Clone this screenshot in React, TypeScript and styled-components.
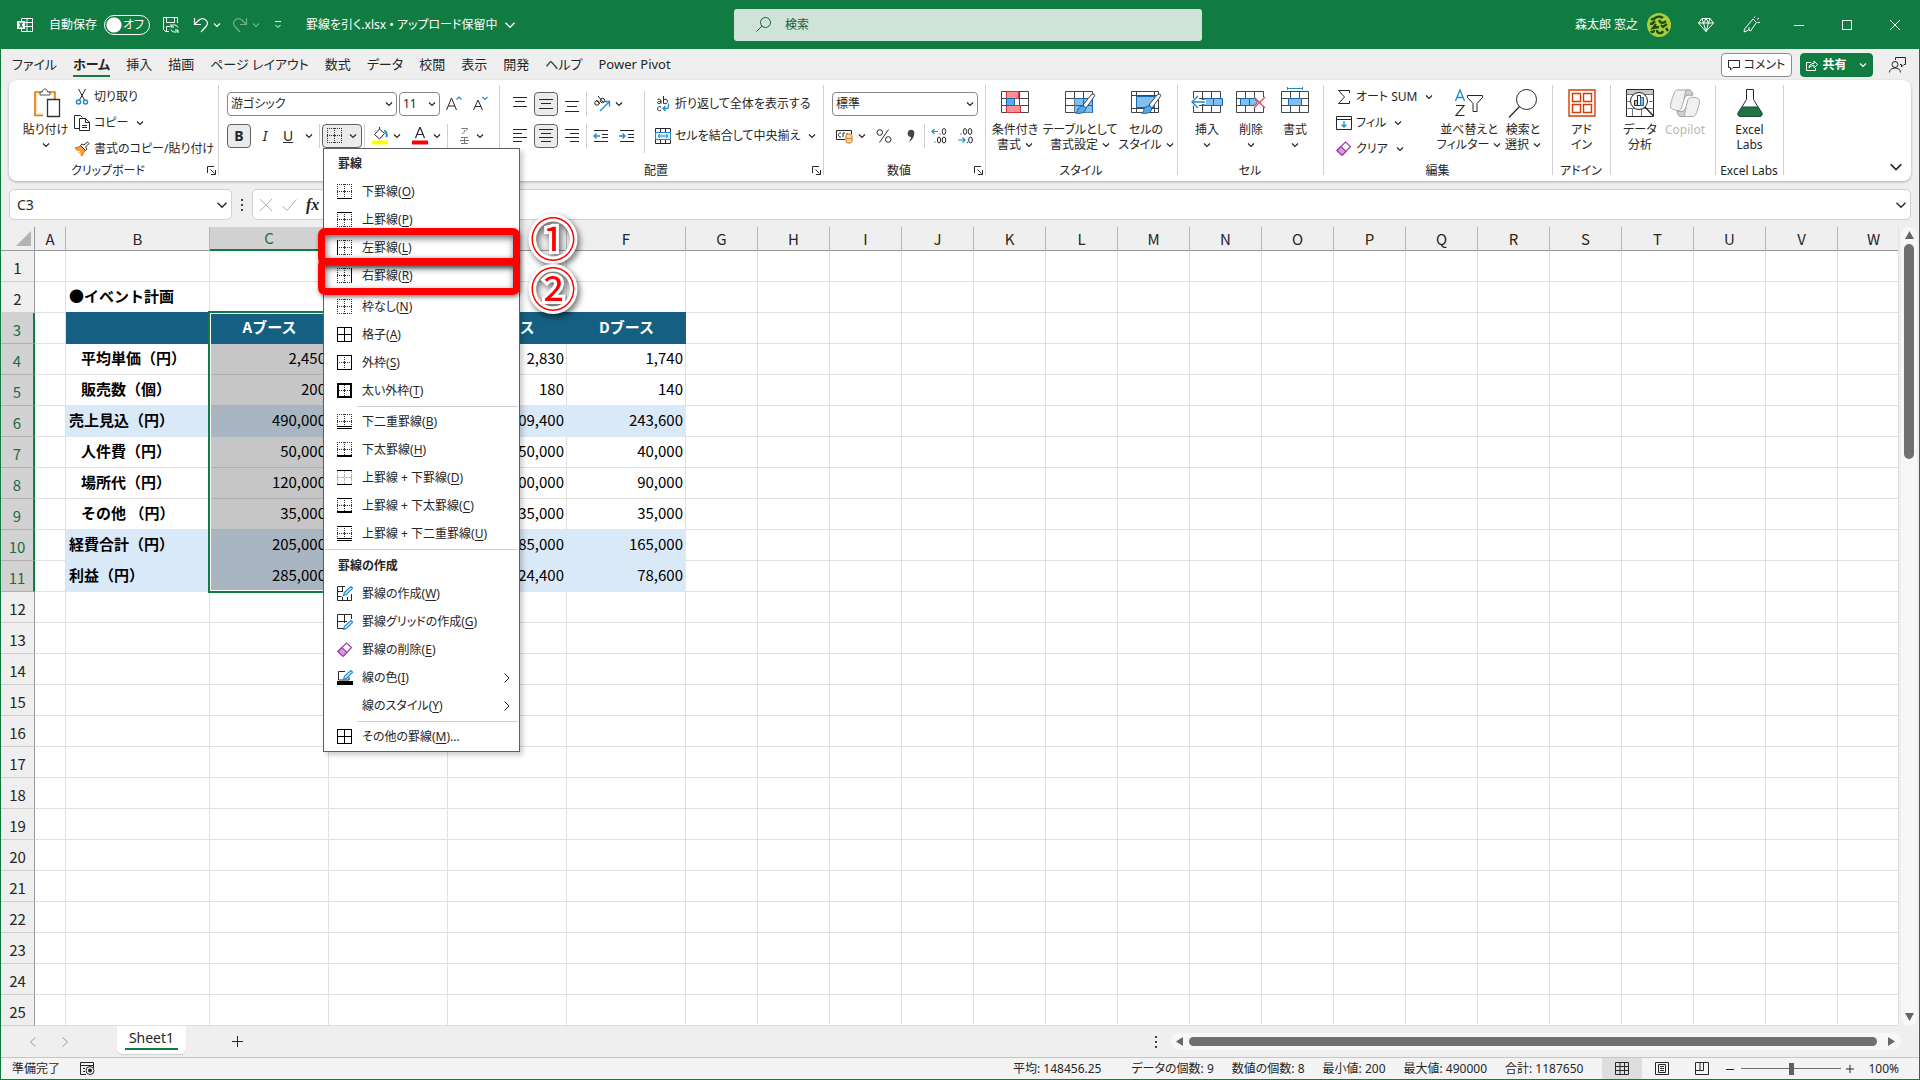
import React from "react";
import styled, { createGlobalStyle, css } from "styled-components";

const GREEN = "#107c41";
const INK = "#262626";
const BLUE = "#1e8bcd";
const UI = `"Noto Sans", "Noto Sans CJK JP", sans-serif`;
const SHEET = `"Noto Sans CJK JP", "Noto Sans", sans-serif`;

const Global = createGlobalStyle`
  *, *::after { box-sizing: border-box; }
  body { margin: 0; background: #efefef; overflow: hidden; }
  button, input, select { font: inherit; color: inherit; padding: 0; margin: 0; border: 0; background: none; border-radius: 0; font-feature-settings: inherit; }
  svg { display: block; flex: none; }
`;

const Window = styled.div`
  height: 100vh;
  display: flex;
  flex-direction: column;
  border: solid ${GREEN};
  border-width: 0 1px 1px;
  background: #efefef;
  color: ${INK};
  font: 12px/16px ${UI};
  font-feature-settings: "palt";
  white-space: nowrap;
`;

/* ---------- title bar ---------- */

const TitleBar = styled.header`
  height: 49px;
  flex: none;
  display: flex;
  align-items: center;
  padding-left: 16px;
  background: ${GREEN};
  color: #fff;
`;
const TitleLeft = styled.div`
  flex: 1;
  display: flex;
  align-items: center;
`;
const TitleRight = styled.div`
  flex: 1;
  display: flex;
  align-items: center;
  justify-content: flex-end;
`;
const AutoSave = styled.label`
  display: flex;
  align-items: center;
  gap: 7px;
  margin: 0 13px 0 16px;
`;
const Switch = styled.span`
  display: grid;
  align-items: center;
  > * { grid-area: 1 / 1; }
  > span { text-align: right; padding-right: 6px; }
  > input {
    appearance: none;
    width: 46px;
    height: 20px;
    border: 1px solid #fff;
    border-radius: 10px;
    background: radial-gradient(circle at 9px 9px, #fff 7px, transparent 8px);
  }
`;
const IconButton = styled.button<{ $w?: number; $faint?: boolean }>`
  width: ${(p) => p.$w ?? 16}px;
  height: 32px;
  display: flex;
  align-items: center;
  justify-content: center;
  opacity: ${(p) => (p.$faint ? 0.4 : 1)};
`;
const DocName = styled.button`
  display: flex;
  align-items: center;
  gap: 6px;
  margin-left: 20px;
`;
const Search = styled.label`
  width: min(468px, 30vw);
  height: 32px;
  display: flex;
  align-items: center;
  gap: 14px;
  padding-left: 22px;
  border-radius: 3px;
  background: #cfe3d8;
  color: #185c37;
  input { flex: 1; outline: 0; }
  input::placeholder { color: #185c37; opacity: 1; }
`;
const User = styled.button`
  display: flex;
  align-items: center;
  gap: 9px;
  margin-right: 14px;
`;

/* ---------- tab row ---------- */

const TabRow = styled.nav`
  height: 31px;
  flex: none;
  display: flex;
  align-items: center;
  gap: 16px;
  padding: 0 6px 0 11px;
  font-size: 13px;
`;
const Tab = styled.button<{ $active?: boolean }>`
  height: 24px;
  border-bottom: 2px solid transparent;
  ${(p) => p.$active && css`font-weight: 700; border-color: ${GREEN};`}
`;
const TabActions = styled.div`
  margin-left: auto;
  display: flex;
  align-items: center;
  gap: 8px;
  font-size: 12px;
`;
const PillButton = styled.button<{ $solid?: boolean }>`
  height: 24px;
  display: flex;
  align-items: center;
  justify-content: center;
  gap: 4px;
  width: ${(p) => (p.$solid ? 73 : 71)}px;
  border-radius: 4px;
  border: 1px solid ${(p) => (p.$solid ? GREEN : "#8a8a8a")};
  background: ${(p) => (p.$solid ? GREEN : "#fff")};
  color: ${(p) => (p.$solid ? "#fff" : INK)};
  font-weight: ${(p) => (p.$solid ? 700 : 400)};
`;

/* ---------- ribbon ---------- */

const Ribbon = styled.section`
  position: relative;
  z-index: 2;
  height: 101px;
  flex: none;
  display: flex;
  margin: 0 8px;
  border-radius: 8px;
  background: #fff;
  box-shadow: 0 1px 3px rgba(0, 0, 0, 0.28);
`;
const GroupBox = styled.div<{ $w: number }>`
  width: ${(p) => p.$w}px;
  display: flex;
  flex-direction: column;
  padding-bottom: 2px;
`;
const GroupBody = styled.div`
  flex: 1;
  display: flex;
`;
const GroupFoot = styled.div`
  height: 16px;
  display: flex;
  align-items: center;
  padding-right: 1px;
  > span { flex: 1; text-align: center; }
`;
const GroupRule = styled.div`
  width: 1px;
  margin: 5px 0 6px;
  background: #d0d0d0;
`;
const Rows = styled.div<{ $flush?: boolean }>`
  display: flex;
  flex-direction: column;
  gap: 8px;
  padding: 12px 0 0 ${(p) => (p.$flush ? 0 : 8)}px;
`;
const Row = styled.div`
  height: 24px;
  display: flex;
  align-items: center;
  gap: 2px;
`;
const Lines = styled.div<{ $w?: number }>`
  width: ${(p) => (p.$w ? `${p.$w}px` : "auto")};
  display: flex;
  flex-direction: column;
  padding-top: 4px;
`;
const LineButton = styled.button<{ $h?: number }>`
  height: ${(p) => p.$h ?? 26}px;
  display: flex;
  align-items: center;
  gap: 4px;
  > svg:nth-of-type(2) { margin-left: 4px; }
`;
const Tool = styled.button<{ $w?: number; $on?: boolean }>`
  width: ${(p) => p.$w ?? 24}px;
  height: 24px;
  display: flex;
  align-items: center;
  justify-content: ${(p) => (p.$w ? "space-between" : "center")};
  padding: 0 ${(p) => (p.$w ? 4 : 0)}px;
  border: ${(p) => (p.$on ? "1px solid #616161" : "0")};
  border-radius: 4px;
  background: ${(p) => (p.$on ? "#ebebeb" : "transparent")};
  font-size: 14px;
`;
const Rule = styled.div`
  width: 1px;
  height: 24px;
  background: #d0d0d0;
`;
const TallRule = styled.div`
  width: 1px;
  height: 62px;
  margin: 11px 10px 0 5px;
  background: #d0d0d0;
`;
const SelectBox = styled.span<{ $w: number }>`
  display: grid;
  align-items: center;
  width: ${(p) => p.$w}px;
  > * { grid-area: 1 / 1; }
  > svg { justify-self: end; margin-right: 4px; pointer-events: none; }
  > select {
    appearance: none;
    width: 100%;
    height: 24px;
    padding-left: 3px;
    border: 1px solid #8a8a8a;
    border-radius: 4px;
    background: #fff;
  }
`;
const BigButton = styled.button<{ $w: number; $dim?: boolean }>`
  width: ${(p) => p.$w}px;
  display: flex;
  flex-direction: column;
  align-items: center;
  padding-top: 7px;
  line-height: 15px;
  color: ${(p) => (p.$dim ? "#b8b8b8" : INK)};
  > svg { height: 32px; margin-bottom: 3px; }
  > span { display: flex; align-items: center; justify-content: center; gap: 4px; height: 15px; }
`;
const Indent = styled.div<{ $w: number }>`
  width: ${(p) => p.$w}px;
  flex: none;
`;
const Collapse = styled.button`
  margin: 0 8px 7px auto;
  align-self: flex-end;
`;

/* ---------- border menu ---------- */

const MenuAnchor = styled.div`
  position: relative;
  display: flex;
`;
const Menu = styled.div`
  position: absolute;
  z-index: 5;
  top: 24px;
  left: 1px;
  width: 197px;
  background: #fff;
  border: 1px solid #5f5f5f;
  box-shadow: 3px 3px 5px rgba(0, 0, 0, 0.2);
`;
const MenuHead = styled.div`
  height: 29px;
  padding-left: 14px;
  line-height: 29px;
  font-weight: 700;
`;
const MenuItem = styled.button`
  width: 100%;
  height: 28px;
  display: flex;
  align-items: center;
  gap: 9px;
  padding: 0 8px 0 13px;
  text-align: left;
  > span { flex: 1; }
  u { text-underline-offset: 2px; }
`;
const MenuRule = styled.div<{ $full?: boolean }>`
  height: 3px;
  padding: 1px 1px 1px ${(p) => (p.$full ? 1 : 33)}px;
  background: #cfcfcf content-box;
`;
const Marker = styled.div<{ $top: number }>`
  position: absolute;
  top: ${(p) => p.$top}px;
  left: -6px;
  right: -1px;
  height: 37px;
  border: 7px solid #f00;
  border-radius: 7px;
  box-shadow: 1px 2px 4px rgba(0, 0, 0, 0.5), inset 1px 3px 7px rgba(0, 0, 0, 0.6);
  pointer-events: none;
`;
const Badge = styled.div<{ $top: number }>`
  position: absolute;
  top: ${(p) => p.$top}px;
  left: 205px;
  width: 48px;
  text-align: center;
  font: 400 46px/48px "Noto Sans CJK JP", sans-serif;
  color: #f00;
  -webkit-text-stroke: 6px #fff;
  paint-order: stroke fill;
  filter: drop-shadow(2px 3px 3px rgba(0, 0, 0, 0.6));
`;

/* ---------- formula bar ---------- */

const FormulaRow = styled.div`
  height: 31px;
  flex: none;
  display: flex;
  align-items: center;
  margin: 8px 8px 7px;
`;
const Field = styled.div<{ $w?: number }>`
  ${(p) => (p.$w ? `width: ${p.$w}px;` : "flex: 1;")}
  height: 31px;
  display: flex;
  align-items: center;
  padding: 0 3px 0 7px;
  border: 1px solid #d0d0d0;
  border-radius: 5px;
  background: #fff;
  font-size: 14px;
  input { flex: 1; min-width: 0; outline: 0; }
`;
const Dots = styled.div`
  width: 20px;
  display: flex;
  justify-content: center;
`;
const Fx = styled.button`
  width: 16px;
  text-align: left;
  font: italic 700 16px/20px "Liberation Serif", serif;
`;

/* ---------- sheet ---------- */

const SheetArea = styled.main`
  flex: 1;
  min-height: 0;
  display: flex;
`;
const SheetClip = styled.div`
  flex: 1;
  min-width: 0;
  overflow: hidden;
  background: #fff;
  border-right: 1px solid #e0e0e0;
`;
const Table = styled.table`
  table-layout: fixed;
  width: 1909px;
  border-collapse: separate;
  border-spacing: 0;
  font: 15px/22px ${SHEET};
  font-feature-settings: normal;
  color: #000;
`;
const ColHead = styled.th<{ $on?: boolean }>`
  height: 24px;
  padding: 0;
  font-weight: 400;
  color: ${(p) => (p.$on ? "#1e6b41" : INK)};
  background: ${(p) => (p.$on ? "#d2d2d2" : "#efefef")};
  border-right: 1px solid #b4b4b4;
  border-bottom: ${(p) => (p.$on ? `2px solid ${GREEN}` : "1px solid #999")};
`;
const Corner = styled(ColHead)`
  border-right-color: #999;
  svg { margin-left: 14px; }
`;
const RowHead = styled.th<{ $on?: boolean }>`
  height: 31px;
  padding: 4px 0 0;
  font-weight: 400;
  color: ${(p) => (p.$on ? "#1e6b41" : INK)};
  background: ${(p) => (p.$on ? "#d2d2d2" : "#efefef")};
  border-right: ${(p) => (p.$on ? `2px solid ${GREEN}` : "1px solid #999")};
  border-bottom: 1px solid ${(p) => (p.$on ? "#b0b0b0" : "#cfcfcf")};
`;
const Cell = styled.td<{ $fill?: string; $line?: string; $kind?: string }>`
  height: 31px;
  padding: 0 2px 2px 3px;
  white-space: pre;
  border-right: 1px solid ${(p) => p.$line ?? p.$fill ?? "#e0e0e0"};
  border-bottom: 1px solid ${(p) => p.$line ?? p.$fill ?? "#e0e0e0"};
  ${(p) => p.$fill && `background: ${p.$fill};`}
  ${(p) => p.$fill && !p.$line && `box-shadow: 0 -1px 0 ${p.$fill};`}
  ${(p) => p.$kind === "num" && "text-align: right;"}
  ${(p) => p.$kind === "head" && "text-align: center; font-weight: 700; color: #fff;"}
  ${(p) => p.$kind === "label" && "font-weight: 700;"}
  ${(p) => p.$kind === "sub" && "font-weight: 700; padding-left: 15px;"}
`;
const ActiveCell = styled(Cell)`
  position: relative;
  &::after {
    content: "";
    position: absolute;
    top: -2px;
    left: -2px;
    right: -2px;
    height: 282px;
    border: 2px solid ${GREEN};
    box-shadow: inset 0 0 0 1px #fff;
  }
`;
const VScroll = styled.div`
  width: 16px;
  margin: 0 2px 0 2px;
  display: flex;
  flex-direction: column;
  align-items: center;
  padding: 4px 0;
  gap: 4px;
  border-radius: 8px;
  background: #f7f7f7;
`;
const VThumb = styled.div`
  width: 10px;
  height: 27.2%;
  border-radius: 5px;
  background: #707070;
`;
const Spacer = styled.div`
  flex: 1;
`;

/* ---------- sheet tabs and status ---------- */

const SheetTabs = styled.div`
  height: 32px;
  flex: none;
  display: flex;
  align-items: center;
  border-bottom: 1px solid #c6c6c6;
  padding-left: 16px;
`;
const SheetTab = styled.button`
  align-self: flex-start;
  height: 28px;
  width: 69px;
  margin: 0 3px 0 36px;
  padding-bottom: 2px;
  border-radius: 0 0 5px 5px;
  background: #fff;
  box-shadow: 0 1px 1px #cfcfcf;
  font-size: 14px;
  span { display: block; margin: 0 8px; border-bottom: 2px solid ${GREEN}; line-height: 20px; }
`;
const HScroll = styled.div`
  flex: 0 1 730px;
  height: 17px;
  margin: 0 18px 0 5px;
  padding: 0 5px;
  display: flex;
  align-items: center;
  gap: 4px;
  border-radius: 8px;
  background: #f7f7f7;
`;
const HThumb = styled.div`
  flex: 1;
  height: 9px;
  margin-right: 6px;
  border-radius: 5px;
  background: #707070;
`;
const Status = styled.footer`
  height: 21px;
  flex: none;
  display: flex;
  align-items: center;
  padding: 0 20px 0 11px;
  background: #f4f4f4;
`;
const Stats = styled.div`
  margin-left: auto;
  display: flex;
  gap: 18px;
  padding-right: 19px;
  > span:first-child { margin-right: 12px; }
`;
const ViewButton = styled.button<{ $on?: boolean }>`
  width: 40px;
  height: 21px;
  display: flex;
  align-items: center;
  justify-content: center;
  background: ${(p) => (p.$on ? "#dedede" : "transparent")};
`;
const Zoom = styled.input`
  appearance: none;
  width: 100px;
  height: 12px;
  margin: 0 3px;
  background: linear-gradient(#707070, #707070) center / 100% 1px no-repeat;
  &::-webkit-slider-thumb {
    appearance: none;
    width: 5px;
    height: 12px;
    background: #616161;
  }
`;

/* ---------- icons ---------- */

const Svg = ({ w = 16, h = w, children, c = INK, vb }: { w?: number; h?: number; c?: string; vb?: string; children: React.ReactNode }) => (
  <svg width={w} height={h} viewBox={vb ?? `0 0 ${w} ${h}`} fill="none" stroke={c} aria-hidden="true">
    {children}
  </svg>
);
const Chev = ({ c = INK, s = 8 }: { c?: string; s?: number }) => (
  <Svg w={s} vb="0 0 8 8" c={c}><path d="M1 2.5l3 3 3-3" strokeWidth={s > 8 ? 0.9 : 1.2} /></Svg>
);
const Launcher = () => (
  <Svg w={10}><path d="M.5 7V.5H7M3.5 3.5l4 4M8.5 4v4.5H4" /></Svg>
);

type Edge = 0 | 1 | 2 | 3;
const BorderIcon = ({ t = 0, b = 0, l = 0, r = 0, grid, faint, dbl }: { t?: Edge; b?: Edge; l?: Edge; r?: Edge; grid?: boolean; faint?: boolean; dbl?: boolean }) => {
  const dot = grid ? undefined : faint ? "3 1" : "1 1";
  const c = faint ? "#b5b5b5" : "#333";
  return (
    <Svg w={16} c={c}>
      <path d="M0 .5h15M0 14.5h15M.5 0v15M14.5 0v15M0 7.5h15M7.5 0v15" strokeDasharray={dot} stroke={grid ? "#000" : c} />
      {!grid && !faint && <path d="M6 7.5h3M7.5 6v3" />}
      {!!t && <path d={`M0 ${t / 2}h15`} strokeWidth={t} stroke="#000" />}
      {!!b && <path d={`M0 ${15 - b / 2}h15`} strokeWidth={b} stroke="#000" />}
      {!!l && <path d={`M${l / 2} 0v15`} strokeWidth={l} stroke="#000" />}
      {!!r && <path d={`M${15 - r / 2} 0v15`} strokeWidth={r} stroke="#000" />}
      {dbl && <><path d="M0 13.5h15" stroke="#fff" /><path d="M0 12.5h15M0 14.5h15" stroke="#000" /></>}
    </Svg>
  );
};
const Pencil = ({ x = 0, y = 0 }) => (
  <path transform={`translate(${x} ${y})`} d="M.5 9.5l1-3.2L7.8.6l1.8 1.7-6.2 6.2z" fill="#cfe6f7" stroke={BLUE} strokeWidth="1.2" />
);
const Eraser = () => (
  <Svg w={16} c="#9b3fa8">
    <path d="M1 9.5L9.500 1 14.500 5.500 6.500 14H5.500z" fill="#fff" strokeWidth="1.2" />
    <path d="M1 9.5L5 5.5l5 5L6.500 14H5.500z" fill="#d59ddc" strokeWidth="1.2" />
  </Svg>
);
const AlignIcon = ({ rows }: { rows: [number, number, number][] }) => (
  <Svg w={16}>{rows.map(([x, y, w]) => <path key={y} d={`M${x} ${y}.5h${w}`} />)}</Svg>
);
const IndentIcon = ({ out }: { out?: boolean }) => (
  <Svg w={16}>
    <path d="M1 2.5h14M9 6.5h6M9 9.5h6M1 13.5h14" />
    <path stroke={BLUE} strokeWidth="1.3" d={out ? "M7 8H1m2.5-2.5L1 8l2.5 2.5" : "M0 8h6M3.500 5.500L6 8l-2.500 2.500"} />
  </Svg>
);
const GridLines = ({ x = 1, y = 4 }) => (
  <path d={`M${x}.5 ${y}.5h27v21h-27zM${x} ${y + 7}.5h28M${x} ${y + 14}.5h28M${x + 9}.5 ${y}v22M${x + 18}.5 ${y}v22`} fill="#fff" stroke="#444" />
);
const Brush = () => (
  <g transform="translate(9 11)">
    <path d="M20 -4c2 0 2 1 1 3L13 10l-3-3L18 -3z" fill="#fff" stroke="#444" />
    <path d="M10 8c2 0 3.500 2 2.500 4-1.500 3-6 4-10 3 2-1 2-2 2.500-4 .5-2 3-3 5-3z" fill="#5ba8e5" stroke="#1467ae" />
  </g>
);

const Triangle = ({ d }: { d: string }) => <Svg w={9} c="none"><path d={d} fill="#666" /></Svg>;

/* ---------- ribbon pieces ---------- */

const Group = ({ w, label, launcher, children }: { w: number; label?: string; launcher?: boolean; children: React.ReactNode }) => (
  <>
    <GroupBox $w={w}>
      <GroupBody>{children}</GroupBody>
      <GroupFoot>
        <span>{label}</span>
        {launcher && <button aria-label="詳細"><Launcher /></button>}
      </GroupFoot>
    </GroupBox>
    <GroupRule />
  </>
);

const Big = ({ w, lines, drop, dim, children }: { w: number; lines: string[]; drop?: boolean; dim?: boolean; children: React.ReactNode }) => (
  <BigButton $w={w} $dim={dim}>
    {children}
    {lines.map((t, i) => (
      <span key={t}>{t}{drop && i === 1 && <Chev />}</span>
    ))}
    {drop && lines.length === 1 && <span><Chev /></span>}
  </BigButton>
);

const Item = ({ icon, text, k, tail, sub }: { icon?: React.ReactNode; text: string; k: string; tail?: string; sub?: boolean }) => (
  <MenuItem>
    {icon ?? <Indent $w={16} />}
    <span>{text}(<u>{k}</u>){tail}</span>
    {sub && <Svg w={8} h={12}><path d="M1.500 1.500L6 6l-4.500 4.500" /></Svg>}
  </MenuItem>
);

const BorderMenu = () => (
  <Menu>
    <MenuHead>罫線</MenuHead>
    <Item icon={<BorderIcon b={1} />} text="下罫線" k="O" />
    <Item icon={<BorderIcon t={1} />} text="上罫線" k="P" />
    <Item icon={<BorderIcon l={1} />} text="左罫線" k="L" />
    <Item icon={<BorderIcon r={1} />} text="右罫線" k="R" />
    <MenuRule />
    <Item icon={<BorderIcon />} text="枠なし" k="N" />
    <Item icon={<BorderIcon grid />} text="格子" k="A" />
    <Item icon={<BorderIcon t={1} b={1} l={1} r={1} />} text="外枠" k="S" />
    <Item icon={<BorderIcon t={2} b={2} l={2} r={2} />} text="太い外枠" k="T" />
    <MenuRule />
    <Item icon={<BorderIcon dbl />} text="下二重罫線" k="B" />
    <Item icon={<BorderIcon b={2} />} text="下太罫線" k="H" />
    <Item icon={<BorderIcon t={1} b={1} faint />} text="上罫線 + 下罫線" k="D" />
    <Item icon={<BorderIcon t={1} b={2} />} text="上罫線 + 下太罫線" k="C" />
    <Item icon={<BorderIcon t={1} dbl />} text="上罫線 + 下二重罫線" k="U" />
    <MenuRule $full />
    <MenuHead>罫線の作成</MenuHead>
    <Item icon={<Svg w={16}><path d="M8 .5H.5v14h14V8M.5 5.500H6M5.500 .5V5M.5 10.500h4M5.500 14v-3M10.500 14v-3" /><Pencil x={6} /></Svg>} text="罫線の作成" k="W" />
    <Item icon={<Svg w={16}><path d="M7 14.500H.5V.5h14V5M.5 7.500H10M7.500 .5V9" /><Pencil x={6} y={6} /></Svg>} text="罫線グリッドの作成" k="G" />
    <Item icon={<Eraser />} text="罫線の削除" k="E" />
    <Item icon={<Svg w={16}><path d="M8 1.500H1.500V10H12V7" /><Pencil x={6} /><path d="M0 13h16" strokeWidth="4" stroke="#000" /></Svg>} text="線の色" k="I" sub />
    <Item text="線のスタイル" k="Y" sub />
    <MenuRule />
    <Item icon={<BorderIcon grid />} text="その他の罫線" k="M" tail="..." />
    <Marker $top={79} />
    <Marker $top={109} />
    <Badge $top={63}>①</Badge>
    <Badge $top={113}>②</Badge>
  </Menu>
);

const Select = ({ w, value, label }: { w: number; value: string; label: string }) => (
  <SelectBox $w={w}>
    <select aria-label={label} defaultValue={value}><option>{value}</option></select>
    <Chev />
  </SelectBox>
);

const HomeRibbon = () => (
  <Ribbon>
    <Group w={209} label="クリップボード" launcher>
      <Indent $w={8} />
      <Big w={57} lines={["貼り付け"]} drop>
        <Svg w={30} h={32}>
          <path d="M12 28.500H4V5h20v8" stroke="#e07b00" strokeWidth="1.600" fill="#fbe7c0" />
          <path d="M6.500 7.500h15V26h-15z" fill="#fff" stroke="none" />
          <path d="M9 8V5h2.500c0-4 5-4 5 0H19v3z" fill="#fff" stroke="#555" />
          <path d="M16.500 12.500h12v17h-12z" fill="#fff" stroke="#333" strokeWidth="1.300" />
        </Svg>
      </Big>
      <Lines>
        <LineButton>
          <Svg w={16}><path d="M4.500 0l6 11M11.500 0l-6 11" /><circle cx="4.500" cy="13" r="2" stroke={BLUE} strokeWidth="1.500" /><circle cx="11.500" cy="13" r="2" stroke={BLUE} strokeWidth="1.500" /></Svg>
          切り取り
        </LineButton>
        <LineButton>
          <Svg w={16}><path d="M5 13.500H.5V.5h6l2 2M5.500 3.500h6l4 4v8h-10zM11.500 3.500v4h4M8 10.500h5M8 12.500h5" /></Svg>
          コピー<Chev />
        </LineButton>
        <LineButton>
          <Svg w={16}><path d="M1 7l6-2 4 4-3 6z" fill="#f6a13c" stroke="#d9730d" /><path d="M3 10l3 1M5 12l2 1" stroke="#fff" /><path d="M6.500 4.500l5 5 1.500-1.500L11.500 6l3.500-3.500L13.500 1 10 4 8 3z" fill="#fff" /></Svg>
          書式のコピー/貼り付け
        </LineButton>
      </Lines>
    </Group>
    <Group w={280}>
      <Rows>
        <Row>
          <Select w={170} value="游ゴシック" label="フォント" />
          <Select w={41} value="11" label="フォント サイズ" />
          <Tool aria-label="拡大"><Svg w={18}><path d="M1.500 15L6.500 3l5 12M3 11h7" /><path d="M11.500 4.500L14 2l2.500 2.500" stroke={BLUE} strokeWidth="1.200" /></Svg></Tool>
          <Tool aria-label="縮小"><Svg w={18}><path d="M2.500 15L7 5l4.500 10M4 11.500h6" /><path d="M11.500 2L14 4.500 16.500 2" stroke={BLUE} strokeWidth="1.200" /></Svg></Tool>
        </Row>
        <Row>
          <Tool $on><b>B</b></Tool>
          <Tool><i>I</i></Tool>
          <Tool $w={38}><u>U</u><Chev /></Tool>
          <Rule />
          <MenuAnchor>
            <Tool $w={40} $on aria-label="罫線"><BorderIcon /><Chev /></Tool>
            <BorderMenu />
          </MenuAnchor>
          <Rule />
          <Tool $w={38} aria-label="塗りつぶし"><Svg w={18}><path d="M3.500 7.500L8.500 2l5 4.500L8.500 12zM8.500 2V0" fill="#fff" /><path d="M13 4c2.500 0 3 3 2.500 6" stroke={BLUE} strokeWidth="2" /><path d="M1 15.500h16" stroke="#ff0" strokeWidth="4" /></Svg><Chev /></Tool>
          <Tool $w={38} aria-label="文字色"><Svg w={18}><path d="M4.500 11L9 0l4.500 11M6 7.500h6" strokeWidth="1.200" /><path d="M1 15.500h16" stroke="#f00" strokeWidth="4" /></Svg><Chev /></Tool>
          <Rule />
          <Tool $w={38} aria-label="ふりがな"><Svg w={18} c="#777"><path d="M7.500 1.500h6c0 1.500-1 2-2 2.500M10.500 3c0 2-1 3.500-2.500 4M7 10.500h7M6 13.500h9M7 16.500h7M10.500 10v7" /></Svg><Chev /></Tool>
        </Row>
      </Rows>
    </Group>
    <Group w={323} label="配置" launcher>
      <Rows>
        <Row>
          <Tool aria-label="上揃え"><AlignIcon rows={[[1, 1, 14], [3, 5, 10], [1, 10, 14]]} /></Tool>
          <Tool $on aria-label="上下中央"><AlignIcon rows={[[1, 3, 14], [3, 7, 10], [1, 12, 14]]} /></Tool>
          <Tool aria-label="下揃え"><AlignIcon rows={[[1, 5, 14], [3, 10, 10], [1, 15, 14]]} /></Tool>
          <Rule />
          <Tool $w={38} aria-label="方向"><Svg w={18}><path d="M7 16l9-9M11.500 6.500H16.500v5" stroke={BLUE} strokeWidth="1.300" /><circle cx="4" cy="8" r="2.200" /><path d="M3 5l4 4" /><circle cx="9.500" cy="5.500" r="2.200" /><path d="M5 1l5 6" /></Svg><Chev /></Tool>
        </Row>
        <Row>
          <Tool aria-label="左揃え"><AlignIcon rows={[[1, 1, 14], [1, 5, 9], [1, 9, 14], [1, 13, 9]]} /></Tool>
          <Tool $on aria-label="中央揃え"><AlignIcon rows={[[1, 1, 14], [3, 5, 10], [1, 9, 14], [3, 13, 10]]} /></Tool>
          <Tool aria-label="右揃え"><AlignIcon rows={[[1, 1, 14], [6, 5, 9], [1, 9, 14], [6, 13, 9]]} /></Tool>
          <Rule />
          <Tool aria-label="インデント減"><IndentIcon out /></Tool>
          <Tool aria-label="インデント増"><IndentIcon /></Tool>
        </Row>
      </Rows>
      <TallRule />
      <Rows $flush>
        <LineButton $h={24}>
          <Svg w={16}><path d="M2.500 3.500c2-1 3.500 0 3.500 1.500v2.500M6 5.500c-2 0-3.500 0-3.500 1.200S5 8 6 6.500M8.500 0v7.500c2 .8 4-.3 4-2.200s-2-2.800-4-1.500M6 11c-2-1-3.500 0-3.500 1.700S4 15 6 14.500" /><path d="M13.500 7.500v3c0 1-1 2-2 2H8.500M10.500 10l-2.500 2.500L10.500 15" stroke={BLUE} strokeWidth="1.300" /></Svg>
          折り返して全体を表示する
        </LineButton>
        <LineButton $h={24}>
          <Svg w={16}><path d="M.5.5h15v15H.5zM5.500.5V4M10.500.5V4M5.500 12v3.500M10.500 12v3.500" /><path d="M.5 4.500h15v7H.5z" fill="#e3f1fb" stroke={BLUE} /><path d="M3 8h10M5 6L3 8l2 2M11 6l2 2-2 2" stroke={BLUE} /></Svg>
          セルを結合して中央揃え<Chev />
        </LineButton>
      </Rows>
    </Group>
    <Group w={161} label="数値" launcher>
      <Rows>
        <Row><Select w={146} value="標準" label="表示形式" /></Row>
        <Row>
          <Tool $w={38} aria-label="通貨"><Svg w={18}><path d="M9 12.500H.5v-9h15V7M5 6c-2-.500-2.500 1-2.500 2s.5 2.500 2.500 2M7 10V6l2 0M11 9V6" /><path d="M10 8.500c0-2 6-2 6 0v6c0 2-6 2-6 0z" fill="#fbd9ae" stroke="#d9730d" /><path d="M10 11c1 1 5 1 6 0" stroke="#d9730d" /></Svg><Chev /></Tool>
          <Tool aria-label="パーセント"><Svg w={16}><circle cx="3.800" cy="4.500" r="2.800" /><circle cx="12.200" cy="11.500" r="2.800" /><path d="M12.500 1.500l-9 13" /></Svg></Tool>
          <Tool aria-label="桁区切り"><Svg w={16}><path d="M8 2c5-1 5 4 3.500 7-1 2-2.500 4-5 5 1.500-2 2.500-3 2.500-5C5 9 4.500 3 8 2z" fill="#444" stroke="none" /></Svg></Tool>
          <Rule />
          <Tool aria-label="小数点以下の桁数を増やす"><Svg w={18}><path d="M8 4.500H2M4.500 2L2 4.500 4.500 7" stroke={BLUE} strokeWidth="1.200" /><path d="M10 6.500v1M5 14.500v1" /><ellipse cx="14" cy="4.500" rx="1.800" ry="3" /><ellipse cx="9" cy="13" rx="1.600" ry="3" /><ellipse cx="14" cy="13" rx="1.800" ry="3" /></Svg></Tool>
          <Tool aria-label="小数点以下の桁数を減らす"><Svg w={18}><path d="M2 13h7M6.500 10.500L9 13l-2.500 2.500" stroke={BLUE} strokeWidth="1.200" /><path d="M5 6.500v1M11.500 15v1" /><ellipse cx="9" cy="4.500" rx="1.600" ry="3" /><ellipse cx="14" cy="4.500" rx="1.800" ry="3" /><ellipse cx="14.500" cy="13" rx="1.800" ry="3" /></Svg></Tool>
        </Row>
      </Rows>
    </Group>
    <Group w={191} label="スタイル">
      <Indent $w={2} />
      <Big w={54} lines={["条件付き", "書式"]} drop>
        <Svg w={30} h={32}><GridLines /><path d="M6.500 4.500h12v7h-12zM6.500 18.500h14v7h-14z" fill="#ff8f94" stroke="#d13438" /><path d="M6.500 11.500h8v7h-8z" fill="#5ba8e5" stroke="#1467ae" /></Svg>
      </Big>
      <Big w={76} lines={["テーブルとして", "書式設定"]} drop>
        <Svg w={32} h={32}><GridLines /><path d="M10.500 11.500h18v14h-18z" fill="#83beec" stroke="none" /><path d="M10.500 11.500h18v14M19.500 12v14M10 18.500h18" stroke="#1467ae" /><Brush /></Svg>
      </Big>
      <Big w={56} lines={["セルの", "スタイル"]} drop>
        <Svg w={32} h={32}><path d="M1.500 4.500h27v21h-27zM6.500 4v22M24.500 4v22M1 8.500h28M1 21.500h28" stroke="#444" /><path d="M6.500 9.500h18v11h-18z" fill="#83beec" stroke="#1467ae" /><Brush /></Svg>
      </Big>
    </Group>
    <Group w={145} label="セル">
      <Indent $w={7} />
      <Big w={44} lines={["挿入"]} drop>
        <Svg w={32} h={32}><GridLines x={2} /><path d="M12.500 11.500h19v7h-19zM22.500 12v7" fill="#83beec" stroke="#1467ae" /><path d="M2 15h13M7 9.500L1.500 15 7 20.500" stroke="#fff" strokeWidth="4" /><path d="M1 15h13M7 9L1 15l6 6" stroke={BLUE} strokeWidth="1.400" /></Svg>
      </Big>
      <Big w={44} lines={["削除"]} drop>
        <Svg w={32} h={32}><GridLines /><path d="M16 10h16v10H16z" fill="#fff" stroke="none" /><path d="M5.500 11.500h14l3 3.500-3 3.500h-14zM14.500 12v7" fill="#83beec" stroke="#1467ae" /><path d="M19 10l11 11M30 10L19 21" stroke="#e8484d" strokeWidth="1.300" /></Svg>
      </Big>
      <Big w={44} lines={["書式"]} drop>
        <Svg w={32} h={32}><GridLines x={2} /><path d="M9.500 11.500h13v7h-13z" fill="#83beec" stroke="#1467ae" /><path d="M8.500 0v3M23.500 0v3M8 1.500h16" stroke={BLUE} /></Svg>
      </Big>
    </Group>
    <Group w={228} label="編集">
      <Indent $w={12} />
      <Lines $w={105}>
        <LineButton><Svg w={16}><path d="M13.500 4V1.500h-11L8.500 8l-6 6.500h11V12" /></Svg>オート SUM<Chev /></LineButton>
        <LineButton><Svg w={16}><path d="M.5 1.500h15v13H.5zM.5 4.500h15" /><path d="M8 6v6M5.500 9.500L8 12l2.500-2.500" stroke={BLUE} strokeWidth="1.300" /></Svg>フィル<Chev /></LineButton>
        <LineButton><Eraser />クリア<Chev /></LineButton>
      </Lines>
      <Big w={56} lines={["並べ替えと", "フィルター"]} drop>
        <Svg w={30} h={32}><path d="M1.500 14L6 3l4.500 11M3 10.500h6" stroke={BLUE} strokeWidth="1.300" /><path d="M2 18.500h8L2 28.500h8.500" strokeWidth="1.200" /><path d="M13.500 8.500h15v2l-5.500 6v8h-4v-8l-5.500-6z" /></Svg>
      </Big>
      <Big w={52} lines={["検索と", "選択"]} drop>
        <Svg w={32} h={32}><circle cx="19.500" cy="12.500" r="10" fill="#fbfbfb" /><path d="M12.500 19.500L2 30.500" strokeWidth="1.200" /></Svg>
      </Big>
    </Group>
    <Group w={57} label="アドイン">
      <Big w={57} lines={["アド", "イン"]}>
        <Svg w={28} h={32} c="#d83b01"><path d="M1 3h26v26H1zM4.500 6.500h8v8h-8zM15.500 6.500h8v8h-8zM4.500 17.500h8v8h-8zM15.500 17.500h8v8h-8z" strokeWidth="1.400" /></Svg>
      </Big>
    </Group>
    <Group w={104}>
      <Indent $w={6} />
      <Big w={46} lines={["データ", "分析"]}>
        <Svg w={28} h={32}><path d="M.5 2.500h27v27H.5z" fill="#fff" /><path d="M1 3h26v4H1z" fill="#c8c8c8" stroke="none" /><path d="M.5 7.500h27M.5 14.500h5M.5 21.500h27M6.500 21v8M15.500 22v7M23 14.500h4.500" stroke="#777" /><circle cx="13" cy="14" r="8.500" fill="#fff" /><path d="M19 20l8.500 9" strokeWidth="1.400" /><path d="M8.500 13.500h3v5h-3z" fill="#bbb" /><path d="M11.500 8.500h3v10h-3z" fill="#fff" /><path d="M14.500 10.500h3v8h-3z" fill="#83beec" stroke="#1467ae" /></Svg>
      </Big>
      <Big w={44} lines={["Copilot"]} dim>
        <Svg w={32} h={32} c="#a8a8a8">
          <path d="M9 3h11c2.500 0 3 2 4 5h-4c-3 0-4 1-5 5l-3 9c-1 3-8 1-10-1-1.500-2 1-9 2.500-13C5.500 5 6.500 3 9 3z" fill="#f1f1f1" />
          <path d="M17 3h3c2.500 0 3 2 4 5h-4c-3 0-4 1-5 4z" fill="#cfcfcf" />
          <path d="M23 29.500H12c-2.500 0-3-2-4-5h4c3 0 4-1 5-5l2-7c1-3 9-3 11 0 1.500 2-1 9-2.500 13-1 3-2 4-4.500 4z" fill="#f1f1f1" />
          <path d="M15 29.500h-3c-2.500 0-3-2-4-5h4c3 0 4-1 5-4z" fill="#cfcfcf" />
        </Svg>
      </Big>
    </Group>
    <Group w={67} label="Excel Labs">
      <Big w={67} lines={["Excel", "Labs"]}>
        <Svg w={26} h={32}><path d="M9.500 2.500h7v10l8 13c1 2 0 4-2 4h-19c-2 0-3-2-2-4l8-13z" fill="#fff" /><path d="M5 20h16l4 6c.5 2-.5 3.500-2.500 3.500h-19C1.500 29.500.5 28 1 26z" fill="#217346" stroke="#184f33" /></Svg>
      </Big>
    </Group>
    <Collapse aria-label="リボンを折りたたむ"><Chev s={14} /></Collapse>
  </Ribbon>
);

/* ---------- sheet data ---------- */

const COLS = "ABCDEFGHIJKLMNOPQRSTUVW".split("");
const WIDTHS: Record<string, number> = { A: 31, B: 144, C: 119, D: 119, E: 119, F: 119 };
const TEAL = "#156082";
const PALE = "#dae9f8";

type Line = { label: string; kind: string; c?: string; e?: string; f?: string; fill?: string };
const DATA: Record<number, Line> = {
  2: { label: "●イベント計画", kind: "label" },
  3: { label: "", kind: "label", c: "Aブース", e: "Cブース", f: "Dブース", fill: TEAL },
  4: { label: "平均単価（円）", kind: "sub", c: "2,450", e: "2,830", f: "1,740" },
  5: { label: "販売数（個）", kind: "sub", c: "200", e: "180", f: "140" },
  6: { label: "売上見込（円）", kind: "label", c: "490,000", e: "509,400", f: "243,600", fill: PALE },
  7: { label: "人件費（円）", kind: "sub", c: "50,000", e: "50,000", f: "40,000" },
  8: { label: "場所代（円）", kind: "sub", c: "120,000", e: "100,000", f: "90,000" },
  9: { label: "その他 （円）", kind: "sub", c: "35,000", e: "35,000", f: "35,000" },
  10: { label: "経費合計（円）", kind: "label", c: "205,000", e: "185,000", f: "165,000", fill: PALE },
  11: { label: "利益（円）", kind: "label", c: "285,000", e: "324,400", f: "78,600", fill: PALE },
};

const renderCell = (col: string, row: number) => {
  const d = DATA[row];
  if (!d || !"BCDEF".includes(col)) return <Cell key={col} />;
  if (col === "B") return <Cell key={col} $kind={d.kind} $fill={d.fill}>{d.label}</Cell>;
  const text = col === "C" ? d.c : col === "E" ? d.e : col === "F" ? d.f : "";
  if (row === 3) {
    const C = col === "C" ? ActiveCell : Cell;
    return <C key={col} $kind="head" $fill={TEAL}>{text}</C>;
  }
  if (col === "C" && row > 3) {
    return <Cell key={col} $kind="num" $fill={d.fill ? "#a9b5c1" : "#c6c6c6"} $line={d.fill ? "#a9b5c1" : "#b0b0b0"}>{text}</Cell>;
  }
  return <Cell key={col} $kind="num" $fill={d.fill}>{text}</Cell>;
};

const Grid = () => (
  <SheetArea>
    <SheetClip>
      <Table>
        <colgroup>
          <col width={34} />
          {COLS.map((c) => <col key={c} width={WIDTHS[c] ?? 72} />)}
        </colgroup>
        <thead>
          <tr>
            <Corner><Svg w={17} h={17} c="none"><path d="M16 1v15H1z" fill="#b3b3b3" /></Svg></Corner>
            {COLS.map((c) => <ColHead key={c} scope="col" $on={c === "C"}>{c}</ColHead>)}
          </tr>
        </thead>
        <tbody>
          {Array.from({ length: 25 }, (_, i) => i + 1).map((r) => (
            <tr key={r}>
              <RowHead scope="row" $on={r >= 3 && r <= 11}>{r}</RowHead>
              {COLS.map((c) => renderCell(c, r))}
            </tr>
          ))}
        </tbody>
      </Table>
    </SheetClip>
    <VScroll>
      <Triangle d="M4.500 0L9 8H0z" />
      <VThumb />
      <Spacer />
      <Triangle d="M4.500 8L9 0H0z" />
    </VScroll>
  </SheetArea>
);

const TABS = ["ファイル", "ホーム", "挿入", "描画", "ページ レイアウト", "数式", "データ", "校閲", "表示", "開発", "ヘルプ", "Power Pivot"];
const STATS = ["平均: 148456.25", "データの個数: 9", "数値の個数: 8", "最小値: 200", "最大値: 490000", "合計: 1187650"];

export default function App() {
  return (
    <Window lang="ja">
      <Global />
      <TitleBar>
        <TitleLeft>
          <Svg w={16} c="#fff"><path d="M4.500 4V1.500h11v13h-11V12M10 1.500v13M4.500 5.500h11M8 9.500h7.500" /><path d="M0 4h8v8H0z" fill="#fff" stroke="none" /><path d="M2.500 5.500l3 5M5.500 5.500l-3 5" stroke={GREEN} strokeWidth="1.400" /></Svg>
          <AutoSave>
            自動保存
            <Switch><input type="checkbox" /><span>オフ</span></Switch>
          </AutoSave>
          <IconButton aria-label="保存"><Svg w={16} c="#fff"><path d="M6 14.500H2.500l-2-2V.5h14V6M3.500.5v5h8v-5M3.500 14V9.500H7M15 10.500A4 4 0 008 9.500M8 7v3h3M8 12.500a4 4 0 007 1M15 16v-3h-3" /></Svg></IconButton>
          <Indent $w={14} />
          <IconButton aria-label="元に戻す"><Svg w={16} c="#fff"><path d="M1.500 1v6.500H8M1.500 7.500L6 3c5-4 11 2 7 6.500L8 15" strokeWidth="1.200" /></Svg></IconButton>
          <IconButton aria-label="元に戻すの一覧"><Chev c="#fff" /></IconButton>
          <Indent $w={7} />
          <IconButton $faint aria-label="やり直し"><Svg w={16} c="#fff"><path d="M14.500 1v6.500H8M14.500 7.500L10 3C5-1-1 5 3 9.500L8 15" strokeWidth="1.200" /></Svg></IconButton>
          <IconButton $faint aria-label="やり直しの一覧"><Chev c="#fff" /></IconButton>
          <Indent $w={6} />
          <IconButton aria-label="クイック アクセス"><Svg w={8} h={10} c="#fff"><path d="M1 1.500h6M1.500 5L4 7.500 6.500 5" /></Svg></IconButton>
          <DocName>罫線を引く.xlsx • アップロード保留中<Chev c="#fff" s={12} /></DocName>
        </TitleLeft>
        <Search>
          <Svg w={15} c="#185c37"><circle cx="9.500" cy="5.500" r="5" /><path d="M6 9l-5.500 5.500" /></Svg>
          <input type="search" placeholder="検索" aria-label="検索" />
        </Search>
        <TitleRight>
          <User>
            森太郎 窓之
            <Svg w={24} c="#1d4d12"><circle cx="12" cy="12" r="12" fill="#a9cf3a" stroke="none" /><path d="M4 6c2 1 4-1 6-2s5 0 6 1M3 11c3 0 4-2 5-3M12 7c1 3 4 4 7 1M9 11l-3 4 6-1M14 12l2 2 4-3M4 18c1 2 3 1 3-1M10 17c0 4 5 4 6 1M19 15l2 3" strokeWidth="2.400" /></Svg>
          </User>
          <IconButton $w={42} aria-label="プレミアム"><Svg w={16} c="#fff"><path d="M4 1.500h8l3.500 4.500L8 14.500.5 6zM.5 6h15M4 1.500L5.500 6 8 14.500 10.500 6 12 1.500M5.500 6L8 1.500 10.500 6" /></Svg></IconButton>
          <IconButton $w={48} aria-label="新機能"><Svg w={17} c="#fff"><path d="M2 12.500L10 3l3.500 3.500-6 8.500-2-1-4 2-.5-1zM11 2l1-1.500M14 3.500L16 2M14.500 6.500H17M6 14v-3" /></Svg></IconButton>
          <IconButton $w={48} aria-label="最小化"><Svg w={10} c="#fff"><path d="M0 5.500h10" /></Svg></IconButton>
          <IconButton $w={48} aria-label="最大化"><Svg w={10} c="#fff"><path d="M.5.5h9v9h-9z" /></Svg></IconButton>
          <IconButton $w={48} aria-label="閉じる"><Svg w={10} c="#fff"><path d="M0 0l10 10M10 0L0 10" /></Svg></IconButton>
        </TitleRight>
      </TitleBar>

      <TabRow>
        {TABS.map((t) => <Tab key={t} $active={t === "ホーム"}>{t}</Tab>)}
        <TabActions>
          <PillButton><Svg w={12}><path d="M.5 1.500h11v7H5l-2.500 2.500V8.500h-2z" /></Svg>コメント</PillButton>
          <PillButton $solid><Svg w={12} c="#fff"><path d="M5 3.500H.5v8h9V9M3 9c0-3 2-4.500 5-4.500V2l3.500 3.500L8 9V6.500c-2 0-4 .5-5 2.500z" /></Svg>共有<Indent $w={4} /><Chev c="#fff" /></PillButton>
          <IconButton $w={32} aria-label="発表者"><Svg w={17}><circle cx="6" cy="8.500" r="3" /><path d="M.5 16.500c0-6 11-6 11 0M6.500 4V1.500h10v7H15L12.500 11V8.500H11" /></Svg></IconButton>
        </TabActions>
      </TabRow>

      <HomeRibbon />

      <FormulaRow>
        <Field $w={223}>
          <input aria-label="名前ボックス" defaultValue="C3" />
          <Chev s={12} />
        </Field>
        <Dots><Svg w={3} h={12} c="none"><path d="M0 0h2v2H0zM0 5h2v2H0zM0 10h2v2H0z" fill="#444" /></Svg></Dots>
        <Field>
          <IconButton $w={12} aria-label="キャンセル"><Svg w={12} c="#b0b0b0"><path d="M0 0l12 12M12 0L0 12" /></Svg></IconButton>
          <IconButton $w={34} aria-label="入力"><Svg w={15} h={12} c="#b0b0b0"><path d="M.5 7L5 11.500 14.500.5" /></Svg></IconButton>
          <Fx aria-label="関数の挿入">fx</Fx>
          <input aria-label="数式バー" />
          <Chev s={12} />
        </Field>
      </FormulaRow>

      <Grid />

      <SheetTabs>
        <IconButton $w={32} aria-label="前のシート"><Svg w={8} h={10} c="#999"><path d="M6.500.5L1.500 5l5 4.500" /></Svg></IconButton>
        <IconButton $w={32} aria-label="次のシート"><Svg w={8} h={10} c="#999"><path d="M1.500.5l5 4.500-5 4.500" /></Svg></IconButton>
        <SheetTab><span>Sheet1</span></SheetTab>
        <GroupRule />
        <Indent $w={31} />
        <IconButton $w={32} aria-label="新しいシート"><Svg w={13}><path d="M6.500 1v11M1 6.500h11" /></Svg></IconButton>
        <Spacer />
        <Dots><Svg w={3} h={12} c="none"><path d="M0 0h2v2H0zM0 5h2v2H0zM0 10h2v2H0z" fill="#444" /></Svg></Dots>
        <HScroll>
          <Triangle d="M0 4.500L7 0v9z" />
          <HThumb />
          <Triangle d="M8 4.500L1 0v9z" />
        </HScroll>
      </SheetTabs>

      <Status>
        準備完了
        <Indent $w={20} />
        <Svg w={15} h={13}><path d="M6 12.500H.5V.5h13V6M.5 3.500h13M3 6.500h2M3 9.500h2" /><circle cx="10" cy="8.500" r="4" /><circle cx="10" cy="8.500" r="2" fill={INK} stroke="none" /></Svg>
        <Stats>{STATS.map((s) => <span key={s}>{s}</span>)}</Stats>
        <ViewButton $on aria-label="標準"><Svg w={14} h={13}><path d="M.5.5h13v12H.5zM.5 4.500h13M.5 8.500h13M5 .5v12M9.500.5v12" /></Svg></ViewButton>
        <ViewButton aria-label="ページ レイアウト"><Svg w={14} h={13}><path d="M.5.5h13v12H.5zM3.500 2.500h7v8h-7zM5 4.500h4M5 6.500h4M5 8.500h4" /></Svg></ViewButton>
        <ViewButton aria-label="改ページ プレビュー"><Svg w={14} h={13}><path d="M.5.5h13v12H.5zM.5 8.500h8v-8M5 .5v8" /></Svg></ViewButton>
        <IconButton $w={16} aria-label="縮小表示"><Svg w={8}><path d="M0 4.500h8" /></Svg></IconButton>
        <Zoom type="range" min={0} max={200} defaultValue={100} aria-label="ズーム" />
        <IconButton $w={12} aria-label="拡大表示"><Svg w={8}><path d="M0 4h8M4 0v8" /></Svg></IconButton>
        <Indent $w={12} />
        100%
      </Status>
    </Window>
  );
}
